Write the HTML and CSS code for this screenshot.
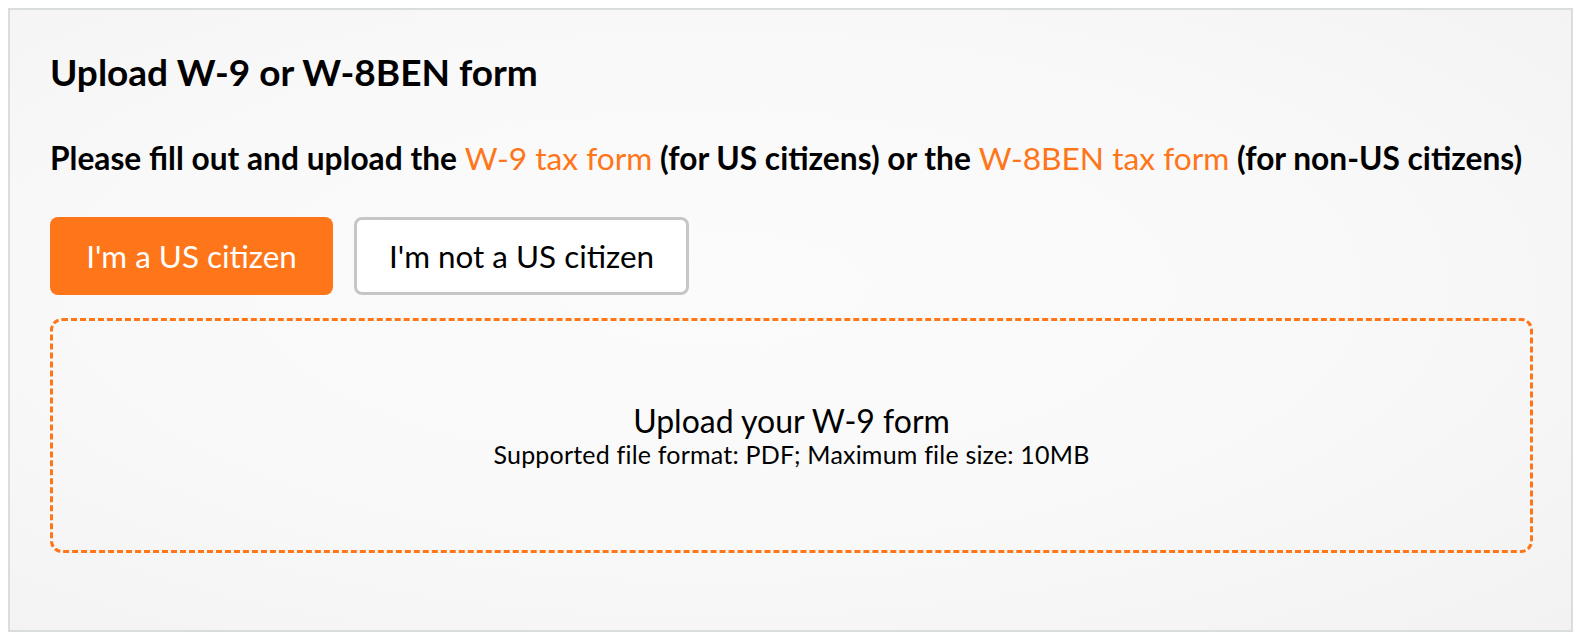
FILE: index.html
```html
<!DOCTYPE html>
<html>
<head>
<meta charset="utf-8">
<link rel="stylesheet" href="styles.css">
</head>
<body>
<section class="card">
  <h2 class="title">Upload W-9 or W-8BEN form</h2>
  <p class="intro">Please fill out and upload the <a class="link" href="#">W-9 tax form</a> (for US citizens) or the <a class="link" href="#">W-8BEN tax form</a> (for non-US citizens)</p>
  <div class="choices">
    <button class="btn btn-active">I'm a US citizen</button>
    <button class="btn btn-outline">I'm not a US citizen</button>
  </div>
  <div class="dropzone">
    <div class="drop-title">Upload your W-9 form</div>
    <div class="drop-sub">Supported file format: PDF; Maximum file size: 10MB</div>
  </div>
</section>
</body>
</html>
```
FILE: styles.css
```css
html, body {
  margin: 0;
  padding: 0;
  background: #ffffff;
}
body {
  padding: 8px 7px 8px 8px;
  font-family: Lato, "Open Sans", sans-serif;
  color: #000;
}
.card {
  box-sizing: border-box;
  width: 1565px;
  height: 624px;
  border: 2px solid #d9dddd;
  background: radial-gradient(ellipse at 45% 45%, #fbfbfb 0%, #f9f9f9 50%, #f2f2f2 100%);
  padding: 40px 38px 0 40px;
}
.title {
  margin: 0;
  font-size: 37px;
  font-weight: 700;
  line-height: 44px;
}
.intro {
  margin: 44px 0 0;
  font-size: 31.7px;
  font-weight: 700;
  line-height: 40px;
  white-space: nowrap;
}
.link {
  color: #ff7519;
  font-weight: 400;
  text-decoration: none;
}
.choices {
  display: flex;
  gap: 21px;
  margin-top: 39px;
}
.btn {
  box-sizing: border-box;
  height: 78px;
  border-radius: 8px;
  font-family: Lato, sans-serif;
  font-size: 31.4px;
  padding: 0;
  cursor: pointer;
}
.btn-active {
  background: #ff7519;
  color: #fff;
  border: 0;
  width: 283px;
}
.btn-outline {
  background: #fff;
  color: #000;
  border: 3px solid #c6c6c6;
  width: 335px;
}
.dropzone {
  box-sizing: border-box;
  margin-top: 23px;
  height: 235px;
  border: 3px dashed #ff7519;
  border-radius: 12px;
  display: flex;
  flex-direction: column;
  align-items: center;
  justify-content: center;
}
.drop-title {
  font-size: 32px;
  line-height: 36px;
}
.drop-sub {
  font-size: 25px;
  line-height: 30px;
  letter-spacing: 0.2px;
}
```
